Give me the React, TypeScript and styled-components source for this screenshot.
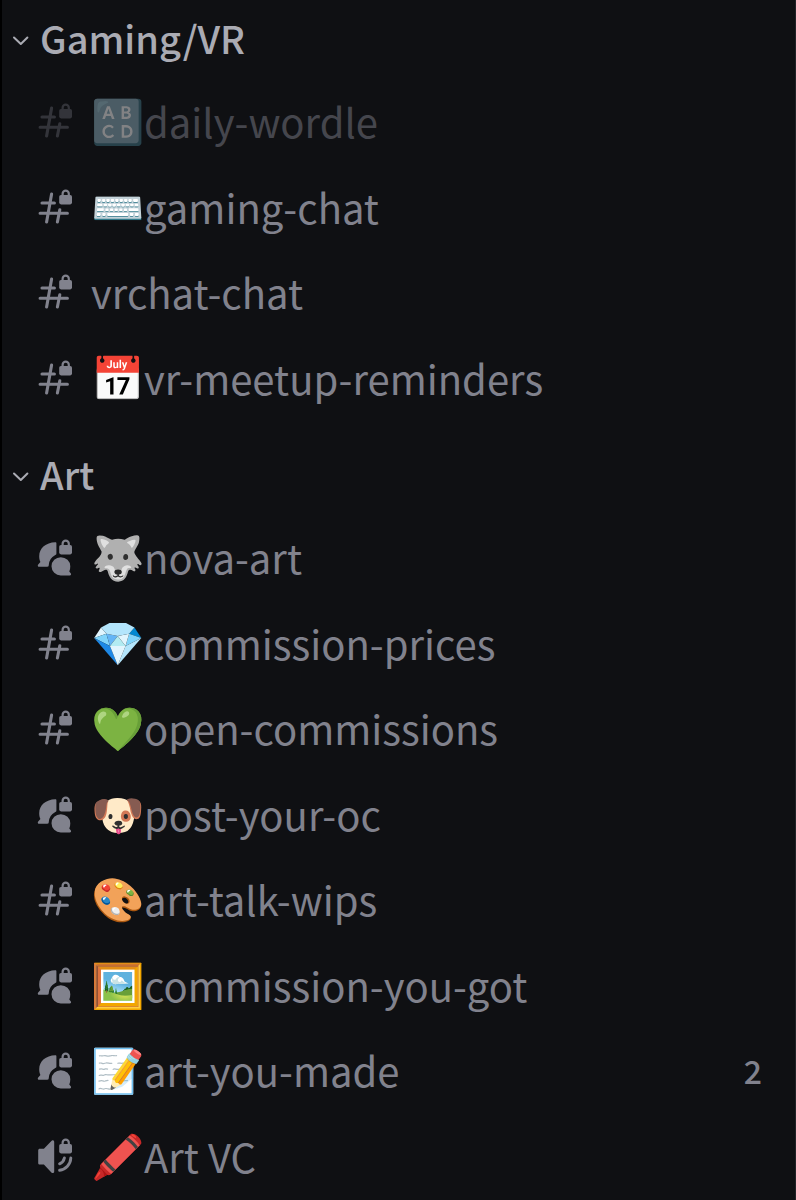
import React, { useState } from 'react';
import styled, { createGlobalStyle } from 'styled-components';

type Kind = 'text' | 'forum' | 'voice';

interface Channel {
  kind: Kind;
  emoji?: string;
  name: string;
  muted?: boolean;
  count?: number;
}

interface Category {
  title: string;
  channels: Channel[];
}

const categories: Category[] = [
  {
    title: 'Gaming/VR',
    channels: [
      { kind: 'text', emoji: '🔠', name: 'daily-wordle', muted: true },
      { kind: 'text', emoji: '⌨️', name: 'gaming-chat' },
      { kind: 'text', name: 'vrchat-chat' },
      { kind: 'text', emoji: '📅', name: 'vr-meetup-reminders' },
    ],
  },
  {
    title: 'Art',
    channels: [
      { kind: 'forum', emoji: '🐺', name: 'nova-art' },
      { kind: 'text', emoji: '💎', name: 'commission-prices' },
      { kind: 'text', emoji: '💚', name: 'open-commissions' },
      { kind: 'forum', emoji: '🐶', name: 'post-your-oc' },
      { kind: 'text', emoji: '🎨', name: 'art-talk-wips' },
      { kind: 'forum', emoji: '🖼️', name: 'commission-you-got' },
      { kind: 'forum', emoji: '📝', name: 'art-you-made', count: 2 },
      { kind: 'voice', emoji: '🖍️', name: 'Art VC' },
    ],
  },
];

const GlobalStyle = createGlobalStyle`
  *, *::before, *::after { box-sizing: border-box; }
  html { background: #0f1013; }
  body {
    margin: 0;
    background: #0f1013;
    color: #81828d;
    font-family: "Noto Sans CJK JP", "Noto Sans", sans-serif;
  }
`;

const Sidebar = styled.nav`
  min-height: 100vh;
  overflow: hidden;
  border-left: 2px solid #000;
  border-right: 1px solid #222327;
  background: #0f1013;
`;

const Group = styled.section`
  & + & {
    margin-top: 16px;
  }
`;

const GroupTitle = styled.h2`
  margin: 0;
  font-size: 38px;
  font-weight: 500;
`;

const GroupToggle = styled.button`
  display: flex;
  align-items: center;
  gap: 8px;
  width: 100%;
  height: 78px;
  padding: 0 8px 2px;
  border: 0;
  background: none;
  color: #aaabb3;
  font: inherit;
  line-height: 56px;
  text-align: left;
  cursor: pointer;
`;

const Chevron = styled.svg<{ $open: boolean }>`
  flex: none;
  width: 22px;
  height: 24px;
  transform: ${(p) => (p.$open ? 'none' : 'rotate(-90deg)')};
`;

const ChannelList = styled.ul`
  margin: 0;
  padding: 0;
  list-style: none;
`;

const ChannelItem = styled.li`
  height: 85px;

  &:nth-child(odd) {
    height: 86px;
  }
`;

const ChannelLink = styled.a<{ $muted?: boolean }>`
  display: flex;
  align-items: center;
  height: 100%;
  padding: 0 33px 0 34px;
  color: inherit;
  text-decoration: none;

  svg {
    opacity: ${(p) => (p.$muted ? 0.32 : 1)};
  }

  span {
    opacity: ${(p) => (p.$muted ? 0.48 : 1)};
  }
`;

const KindIcon = styled.svg`
  flex: none;
  width: 40px;
  height: 40px;
  margin: 0 15px 2px 0;
`;

const Emoji = styled.span`
  flex: none;
  width: 53px;
  padding-bottom: 6px;
  font-size: 43px;
  line-height: 56px;
  white-space: nowrap;
`;

const ChannelName = styled.span`
  flex: 1;
  min-width: 0;
  font-size: 40px;
  line-height: 60px;
  white-space: nowrap;
`;

const Count = styled.span`
  font-size: 32px;
  font-weight: 500;
  line-height: 48px;
`;

const Lock = () => (
  <g>
    <path
      d="M26.6 10V7.8a3.1 3.1 0 0 1 6.2 0V10"
      fill="none"
      stroke="currentColor"
      strokeWidth="2.2"
    />
    <rect x="23.2" y="9" width="12.8" height="9.4" rx="1.8" fill="currentColor" />
  </g>
);

const Glyph = ({ kind }: { kind: Kind }) => {
  if (kind === 'forum') {
    return (
      <g fill="currentColor">
        <path d="M19.3 6.2C9.8 6.4 3.2 12.2 3.2 20.2c0 2.4.5 4.2 1.2 5.7L2.2 28.4c-.9 1-.3 2.4 1 2.4h8.2c.8 0 1.2-.4 1.3-1.2A12.2 12.2 0 0 1 19.3 19c.8-.4 1.1-.8 1.1-1.6V7.3c0-.8-.3-1.1-1.1-1.1Z" />
        <path d="M24.8 21.2a9.3 9.1 0 1 0 0 18.2h8.9c1.3 0 1.8-1.3 1-2.2l-1.4-1.7c.7-1.5 1-3.3 1-5.2a9.5 9.1 0 0 0-9.5-9.1Z" />
      </g>
    );
  }
  if (kind === 'voice') {
    return (
      <g>
        <path
          d="M3.8 13.8h4.1l7.5-7.9c1.1-1.1 2.8-.4 2.8 1.1v29.4c0 1.5-1.7 2.2-2.8 1.1l-7.5-8H3.8c-.9 0-1.6-.7-1.6-1.6V15.4c0-.9.7-1.6 1.6-1.6Z"
          fill="currentColor"
        />
        <path
          d="M23.6 28.8a8 8 0 0 0 4.8-5.8M23.6 35.2A12.8 12.8 0 0 0 34.8 23"
          fill="none"
          stroke="currentColor"
          strokeWidth="2.9"
          strokeLinecap="round"
        />
      </g>
    );
  }
  return (
    <path
      d="M15.6 8 10.6 36M23.8 23.8 21.4 36M6 17H18.4M4.1 27.2H31.4"
      fill="none"
      stroke="currentColor"
      strokeWidth="3.1"
      strokeLinecap="round"
    />
  );
};

const ChannelRow = ({ channel }: { channel: Channel }) => (
  <ChannelItem>
    <ChannelLink href="#" $muted={channel.muted}>
      <KindIcon viewBox="0 0 40 40" aria-hidden="true">
        <Glyph kind={channel.kind} />
        <Lock />
      </KindIcon>
      {channel.emoji && <Emoji>{channel.emoji}</Emoji>}
      <ChannelName>{channel.name}</ChannelName>
      {channel.count !== undefined && <Count>{channel.count}</Count>}
    </ChannelLink>
  </ChannelItem>
);

const CategoryGroup = ({ category }: { category: Category }) => {
  const [open, setOpen] = useState(true);
  return (
    <Group>
      <GroupTitle>
        <GroupToggle type="button" aria-expanded={open} onClick={() => setOpen(!open)}>
          <Chevron $open={open} viewBox="0 0 22 24" aria-hidden="true">
            <path
              d="M4 11.5 10.8 18 17.4 11.5"
              fill="none"
              stroke="currentColor"
              strokeWidth="2"
              strokeLinecap="round"
              strokeLinejoin="round"
            />
          </Chevron>
          {category.title}
        </GroupToggle>
      </GroupTitle>
      {open && (
        <ChannelList>
          {category.channels.map((channel) => (
            <ChannelRow key={channel.name} channel={channel} />
          ))}
        </ChannelList>
      )}
    </Group>
  );
};

export default function App() {
  return (
    <>
      <GlobalStyle />
      <Sidebar aria-label="Channels">
        {categories.map((category) => (
          <CategoryGroup key={category.title} category={category} />
        ))}
      </Sidebar>
    </>
  );
}
